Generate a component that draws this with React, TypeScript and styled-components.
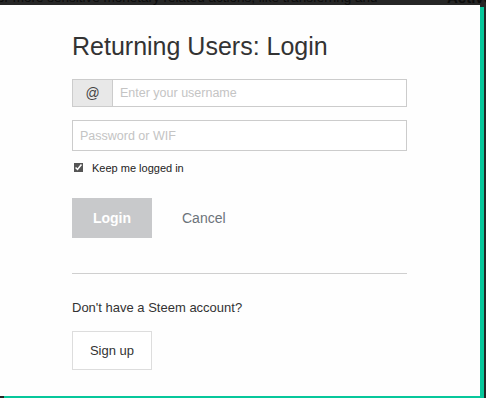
import React from "react";
import styled, { createGlobalStyle } from "styled-components";

const GlobalStyle = createGlobalStyle`
  html, body {
    margin: 0;
    padding: 0;
    background: #262626;
    font-family: "Liberation Sans", Arial, sans-serif;
  }
`;

const App: React.FunctionComponent<{}> = () => {
  return (
    <PageStyled>
      <GlobalStyle />
      <TopStripStyled>
        <span>or more sensitive monetary related actions, like transferring and</span>
        <strong>Active</strong>
      </TopStripStyled>

      <ModalStyled>
        <TitleStyled>Returning Users: Login</TitleStyled>

        <InputGroupStyled>
          <AddonStyled>@</AddonStyled>
          <InputStyled placeholder="Enter your username" $grouped />
        </InputGroupStyled>

        <InputStyled type="password" placeholder="Password or WIF" />

        <CheckRowStyled>
          <input type="checkbox" defaultChecked />
          <span>Keep me logged in</span>
        </CheckRowStyled>

        <ActionsStyled>
          <LoginButtonStyled>Login</LoginButtonStyled>
          <CancelStyled>Cancel</CancelStyled>
        </ActionsStyled>

        <DividerStyled />

        <SignupTextStyled>Don't have a Steem account?</SignupTextStyled>
        <SignupButtonStyled>Sign up</SignupButtonStyled>
      </ModalStyled>
    </PageStyled>
  );
};

const PageStyled = styled.div`
  width: 486px;
  height: 398px;
  overflow: hidden;
  background: #262626;
`;

const TopStripStyled = styled.div`
  height: 5px;
  overflow: hidden;
  display: flex;
  justify-content: space-between;
  color: #0c0c0c;
  font-size: 13.5px;
  line-height: 15px;

  span,
  strong {
    margin-top: -10px;
    white-space: nowrap;
  }

  span {
    margin-left: -3px;
  }

  strong {
    font-size: 15px;
    margin-right: -6px;
  }
`;

const ModalStyled = styled.div`
  width: 480px;
  height: 391px;
  box-sizing: border-box;
  background: #fefefe;
  padding: 27px 73px 0 72px;
  box-shadow: 4px 2px 0 0 #07c79b;
  display: flex;
  flex-direction: column;
  align-items: stretch;
`;

const TitleStyled = styled.h1`
  margin: 0 0 18px;
  font-size: 25px;
  line-height: 29px;
  font-weight: normal;
  color: #333;
`;

const InputGroupStyled = styled.div`
  display: flex;
  height: 28px;
  margin-bottom: 13px;
`;

const AddonStyled = styled.div`
  width: 40px;
  box-sizing: border-box;
  display: flex;
  align-items: center;
  justify-content: center;
  background: #e8e8e8;
  border: 1px solid #cccccc;
  border-right: none;
  font-size: 14px;
  color: #444;
`;

const InputStyled = styled.input<{ $grouped?: boolean }>`
  flex: ${p => (p.$grouped ? "1" : "none")};
  min-width: 0;
  height: ${p => (p.$grouped ? "28px" : "31px")};
  box-sizing: border-box;
  border: 1px solid #cccccc;
  border-radius: 0;
  padding: 0 7px;
  font-family: "Liberation Sans", Arial, sans-serif;
  font-size: 12.5px;
  color: #333;
  background: #fff;
  outline: none;

  &::placeholder {
    color: #c4c4c4;
  }
`;

const CheckRowStyled = styled.label`
  display: flex;
  align-items: center;
  gap: 7px;
  margin-top: 10px;
  font-size: 11px;
  color: #222;

  input {
    margin: 0;
    width: 13px;
    height: 13px;
    accent-color: #555;
    transform: scale(0.75);
  }
`;

const ActionsStyled = styled.div`
  display: flex;
  align-items: center;
  gap: 30px;
  margin-top: 24px;
`;

const LoginButtonStyled = styled.button`
  width: 80px;
  height: 40px;
  border: none;
  background: #c8c9cb;
  color: #fff;
  font-family: "Liberation Sans", Arial, sans-serif;
  font-weight: bold;
  font-size: 14px;
`;

const CancelStyled = styled.span`
  font-size: 14px;
  color: #6c737a;
`;

const DividerStyled = styled.hr`
  margin: 35px 0 0;
  border: none;
  border-top: 1px solid #cfcfcf;
`;

const SignupTextStyled = styled.p`
  margin: 26px 0 0;
  font-size: 13px;
  color: #333;
`;

const SignupButtonStyled = styled.button`
  align-self: flex-start;
  margin-top: 16px;
  width: 80px;
  height: 39px;
  border: 1px solid #dddddd;
  background: #fff;
  color: #333;
  font-family: "Liberation Sans", Arial, sans-serif;
  font-size: 13px;
`;

export default App;
